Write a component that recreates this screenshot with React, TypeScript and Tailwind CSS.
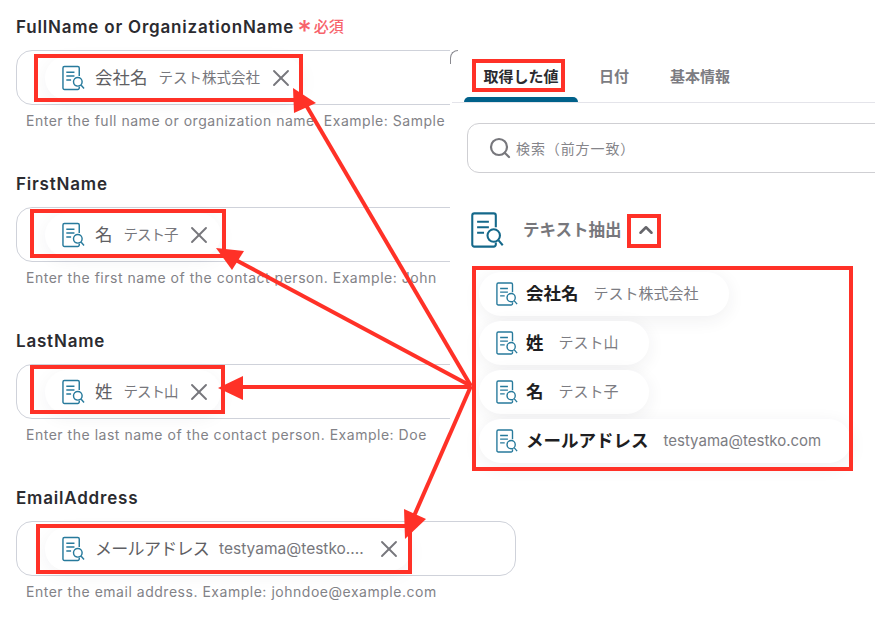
import { ChevronUp, Search, X } from "lucide-react";

const font = "font-['Inter','Noto_Sans_CJK_JP',sans-serif]";

function DocIcon({ className }: { className: string }) {
  return (
    <svg viewBox="0 0 24 26" fill="none" stroke="currentColor" strokeWidth="1.5" className={className}>
      <path d="M18 11V2.500A1.500 1.500 0 0 0 16.500 1H2.500A1.500 1.500 0 0 0 1 2.500V23.500A1.500 1.500 0 0 0 2.500 25H16.500A1.500 1.500 0 0 0 18 23.500V22" />
      <path d="M4.500 7H13M4.500 11H13M4.500 15H9.500" />
      <circle cx="16.500" cy="17" r="4.500" />
      <path d="M20 20.500L23 24" />
    </svg>
  );
}

const fields = [
  {
    label: "FullName or OrganizationName",
    required: true,
    name: "会社名",
    value: "テスト株式会社",
    nameClass: "text-[17.500px]",
    valueClass: "ml-[11px] text-[14.500px]",
    xClass: "ml-[7px]",
    hint: "Enter the full name or organization name. Example: Sample",
  },
  {
    label: "FirstName",
    name: "名",
    value: "テスト子",
    nameClass: "text-[17.500px]",
    valueClass: "ml-[11px] text-[14.500px] tracking-[-1px]",
    xClass: "ml-[7px]",
    hint: "Enter the first name of the contact person. Example: John",
  },
  {
    label: "LastName",
    name: "姓",
    value: "テスト山",
    nameClass: "text-[17.500px]",
    valueClass: "ml-[11px] text-[14.500px] tracking-[-1px]",
    xClass: "ml-[7px]",
    hint: "Enter the last name of the contact person. Example: Doe",
  },
  {
    label: "EmailAddress",
    name: "メールアドレス",
    value: "testyama@testko....",
    nameClass: "text-[17px] tracking-[-0.700px]",
    valueClass: "ml-[10px] text-[15.500px]",
    xClass: "ml-[11px]",
    hint: "Enter the email address. Example: johndoe@example.com",
  },
];

const rows = [
  { name: "会社名", value: "テスト株式会社" },
  { name: "姓", value: "テスト山" },
  { name: "名", value: "テスト子" },
  { name: "メールアドレス", value: "testyama@testko.com" },
];

function Field({ field }: { field: (typeof fields)[number] }) {
  return (
    <div className="h-[157px]">
      <div className="flex h-6 items-center">
        <span className="text-[17px] font-semibold leading-6 tracking-[0.800px] text-[#2b2b30]">{field.label}</span>
        {field.required && (
          <span className="ml-[3px] flex items-center text-[#f7636b]">
            <span className="mt-[8px] text-[28px] font-medium leading-6">*</span>
            <span className="ml-[2px] text-[15px] font-medium leading-6">必須</span>
          </span>
        )}
      </div>
      <div className="mt-[11px] flex h-[55px] w-[500px] items-center rounded-2xl border border-[#cfd2da] pl-[28px]">
        <div className="flex h-[44px] items-center rounded-full bg-white pl-[17px] pr-[8px] shadow-[0_4px_18px_rgba(40,40,60,0.05)]">
          <DocIcon className="h-[26px] w-[23px] text-[#277a9c]" />
          <span className={`ml-[10px] leading-6 text-[#5f5f64] ${field.nameClass}`}>{field.name}</span>
          <span className={`leading-6 text-[#77777c] ${field.valueClass}`}>{field.value}</span>
          <X className={`h-[28px] w-[28px] text-[#77777c] ${field.xClass}`} strokeWidth={1.600} />
        </div>
      </div>
      <p className="ml-[10px] mt-[6px] text-[14px] leading-5 tracking-[0.520px] text-[#828287]">{field.hint}</p>
    </div>
  );
}

function Annotations() {
  const red = "#ff3127";
  return (
    <svg width="875" height="624" className="pointer-events-none absolute left-0 top-0">
      <g fill="none" stroke={red} strokeWidth="4">
        <rect x="36" y="56" width="265" height="44" />
        <rect x="32" y="211" width="192" height="45" />
        <rect x="32" y="367" width="191" height="45" />
        <rect x="38" y="526" width="372" height="46" />
        <rect x="474" y="61" width="89" height="29" />
        <rect x="629" y="216" width="30" height="30" />
        <rect x="474" y="268" width="377" height="201" />
      </g>
      <g stroke={red} strokeWidth="4" fill="none">
        <path d="M471 386L303 100" />
        <path d="M471 386L232 258" />
        <path d="M471 387L236 387" />
        <path d="M471 386L414 516" />
      </g>
      <g fill={red}>
        <path d="M293 88L294 113L316 103Z" />
        <path d="M216 248L244 251L232 270Z" />
        <path d="M218 388L243 376V400Z" />
        <path d="M405 539L404 509L426 519Z" />
      </g>
    </svg>
  );
}

export default function App() {
  return (
    <div className={`relative h-[624px] w-[875px] overflow-hidden bg-white pl-4 pt-[15px] ${font}`}>
      {fields.map((f) => (
        <Field key={f.label} field={f} />
      ))}

      {/* Value picker panel, sits over the inputs */}
      <div className="absolute left-[450px] top-[47px] h-[425px] w-[425px] bg-white">
        <div className="absolute left-0 top-[3px] h-[14px] w-[8px] rounded-tl-[12px] border-l border-t border-[#8a8a90]" />
        <div className="ml-[2px] flex h-[56px] items-end border-b border-[#e4e4ea] pl-[12px]">
          <div className="relative flex h-[55px] w-[114px] items-center justify-center pt-[5px] text-[15px] font-semibold text-[#2b2b30]">
            取得した値
            <div className="absolute bottom-0 left-0 h-[5px] w-full rounded-t-md bg-[#00618a]" />
          </div>
          <div className="ml-[21px] flex h-[55px] items-center pt-[5px] text-[15px] font-semibold text-[#7c7c82]">日付</div>
          <div className="ml-[41px] flex h-[55px] items-center pt-[5px] text-[15px] font-semibold text-[#7c7c82]">基本情報</div>
        </div>

        <div className="ml-[17px] mt-[20px] flex h-[50px] w-[430px] items-center rounded-xl border border-[#cfcfd3] pl-[20px]">
          <Search className="h-[24px] w-[24px] text-[#77777c]" strokeWidth={2.200} />
          <span className="ml-[4px] text-[14px] tracking-[0.900px] text-[#85858a]">検索（前方一致）</span>
        </div>

        <div className="ml-[20px] mt-[38px] flex h-[38px] items-center">
          <DocIcon className="h-[36px] w-[35px] text-[#14688a]" />
          <span className="ml-[18px] text-[16.500px] font-semibold text-[#77777c]">テキスト抽出</span>
          <ChevronUp className="ml-[13px] h-[22px] w-[22px] text-[#66666b]" strokeWidth={2.800} />
        </div>

        <div className="ml-[29px] mt-[23px] flex flex-col items-start gap-[5px]">
          {rows.map((r) => (
            <div
              key={r.name}
              className="flex h-[44px] items-center rounded-full bg-white pl-[17px] pr-[30px] shadow-[0_4px_18px_rgba(40,40,60,0.07)]"
            >
              <DocIcon className="h-[24px] w-[22px] text-[#277a9c]" />
              <span className="ml-[8px] text-[17.500px] font-bold text-[#1e1e22]">{r.name}</span>
              <span className="ml-[15px] text-[15px] text-[#7c7c82]">{r.value}</span>
            </div>
          ))}
        </div>
      </div>

      <Annotations />
    </div>
  );
}
